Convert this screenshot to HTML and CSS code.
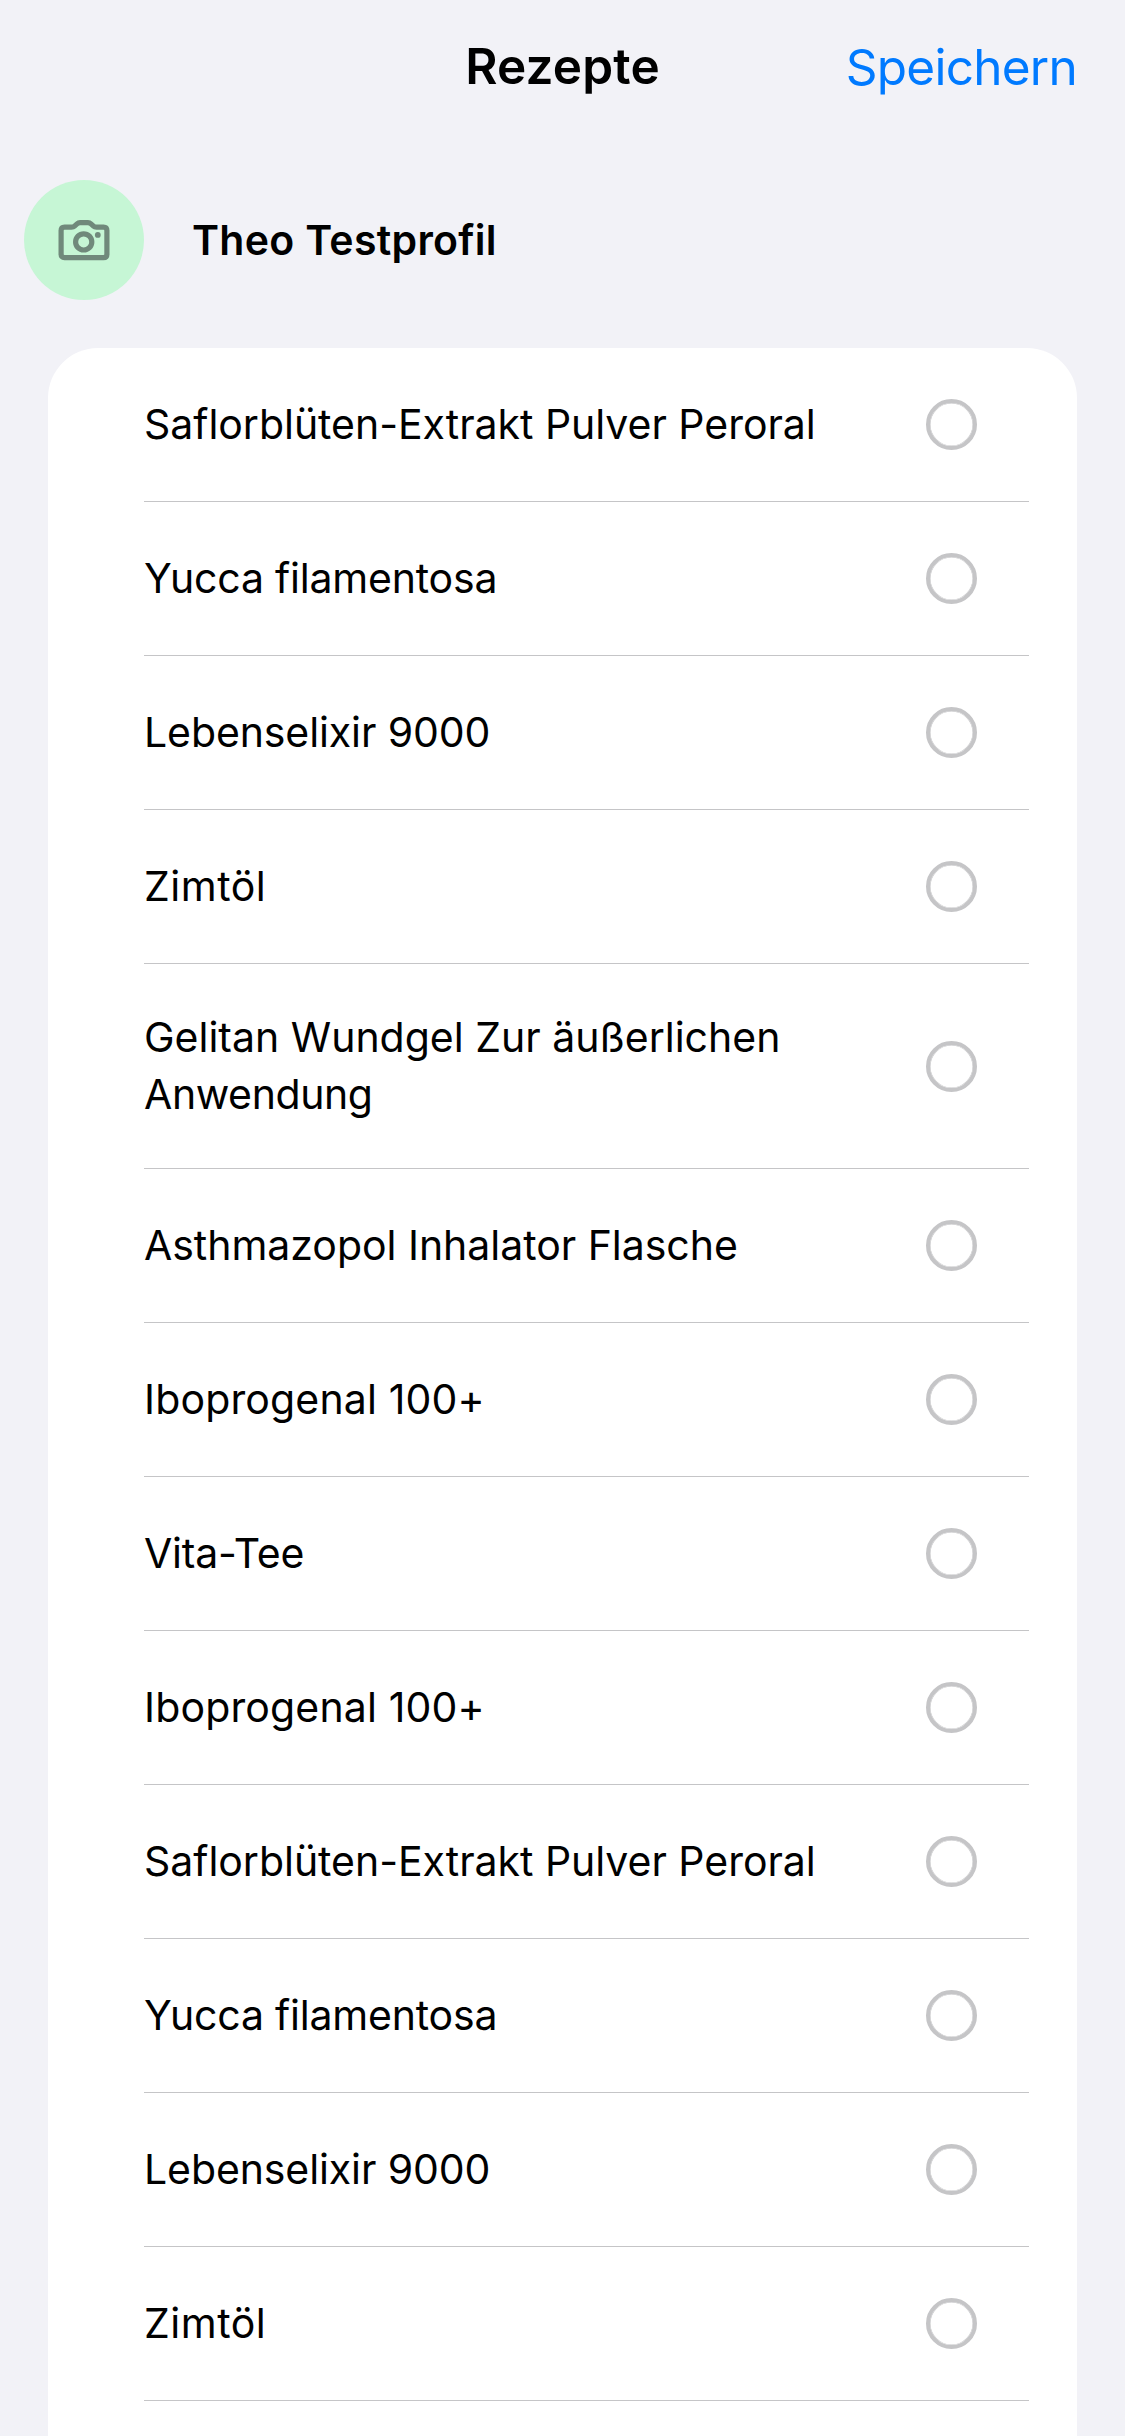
FILE: index.html
```html
<!DOCTYPE html>
<html lang="de">
<head>
<meta charset="utf-8">
<title>Rezepte</title>
<link rel="stylesheet" href="styles.css">
</head>
<body>
<header class="navbar">
  <h1 class="title">Rezepte</h1>
  <a class="save">Speichern</a>
</header>
<section class="profile">
  <div class="avatar">
    <svg class="camera" viewBox="0 0 52 42" fill="none" stroke="#70897b" stroke-width="5.2" stroke-linejoin="round">
      <path d="M6.500 8.200H13.500Q15.500 8.200 16.500 7.200L19 4.900Q20.300 3.700 22 3.700H30Q31.700 3.700 33 4.900L35.500 7.200Q36.500 8.200 38.500 8.200H45.500Q48.900 8.200 48.900 11.600V35.200Q48.900 38.600 45.500 38.600H6.500Q3.100 38.600 3.100 35.200V11.600Q3.100 8.200 6.500 8.200Z"/>
      <circle cx="25.700" cy="22.900" r="8.100"/>
      <circle cx="39.800" cy="15.900" r="2.900" fill="#70897b" stroke="none"/>
    </svg>
  </div>
  <h2 class="name">Theo Testprofil</h2>
</section>
<ul class="list">
  <li class="row"><span class="label t1">Saflorblüten-Extrakt Pulver Peroral</span><i class="radio"></i></li>
  <li class="row"><span class="label t2">Yucca filamentosa</span><i class="radio"></i></li>
  <li class="row"><span class="label t3">Lebenselixir 9000</span><i class="radio"></i></li>
  <li class="row"><span class="label t4">Zimtöl</span><i class="radio"></i></li>
  <li class="row tall"><span class="label">Gelitan Wundgel Zur äußerlichen<br><span class="t5">Anwendung</span></span><i class="radio"></i></li>
  <li class="row"><span class="label t1">Asthmazopol Inhalator Flasche</span><i class="radio"></i></li>
  <li class="row"><span class="label t7">Iboprogenal 100+</span><i class="radio"></i></li>
  <li class="row"><span class="label t2">Vita-Tee</span><i class="radio"></i></li>
  <li class="row"><span class="label t7">Iboprogenal 100+</span><i class="radio"></i></li>
  <li class="row"><span class="label t1">Saflorblüten-Extrakt Pulver Peroral</span><i class="radio"></i></li>
  <li class="row"><span class="label t2">Yucca filamentosa</span><i class="radio"></i></li>
  <li class="row"><span class="label t3">Lebenselixir 9000</span><i class="radio"></i></li>
  <li class="row"><span class="label t4">Zimtöl</span><i class="radio"></i></li>
</ul>
</body>
</html>
```
FILE: styles.css
```css
* { box-sizing: border-box; }
html { height: 100%; }
body {
  margin: 0;
  height: 2436px;
  overflow: hidden;
  display: flex;
  flex-direction: column;
  background: #f2f2f7;
  color: #000;
  font-family: Inter, "Liberation Sans", sans-serif;
  font-size: 41px;
}
.navbar {
  display: grid;
  grid-template-columns: 1fr auto 1fr;
  align-items: center;
  height: 134px;
  padding: 0 48px;
  flex: none;
}
.title {
  grid-column: 2;
  margin: 0;
  padding-bottom: 3px;
  font-size: 49.5px;
  font-weight: 600;
  letter-spacing: 0.15px;
}
.save {
  justify-self: end;
  font-size: 49.5px;
  letter-spacing: -0.75px;
  color: #007aff;
}
.profile {
  display: flex;
  align-items: center;
  gap: 48px;
  height: 214px;
  padding: 0 24px 2px;
  flex: none;
}
.avatar {
  display: grid;
  place-items: center;
  width: 120px;
  height: 120px;
  border-radius: 50%;
  background: #c6f6d5;
}
.camera { width: 52px; height: 42px; }
.name {
  margin: 0;
  font-size: 41px;
  font-weight: 600;
  letter-spacing: 0.3px;
}
.list {
  flex: 1;
  margin: 0 48px;
  padding: 0 48px 0 96px;
  list-style: none;
  background: #fff;
  border-radius: 50px 50px 0 0;
}
.row {
  display: flex;
  align-items: center;
  justify-content: space-between;
  height: 154px;
  padding-right: 52px;
  border-bottom: 1px solid #c5c5c7;
}
.tall { height: 205px; }
.label { line-height: 57px; white-space: nowrap; }
.t1 { letter-spacing: -0.03px; }
.t2 { letter-spacing: -0.2px; }
.t3 { letter-spacing: -0.1px; }
.t4 { letter-spacing: 0.5px; }
.t5 { letter-spacing: -0.4px; }
.t7 { letter-spacing: 0.15px; }
.radio {
  width: 51px;
  height: 51px;
  border: 4px solid #c5c5c7;
  border-radius: 50%;
  box-shadow: inset 0 0 0 0.5px #c5c5c7;
}
```
